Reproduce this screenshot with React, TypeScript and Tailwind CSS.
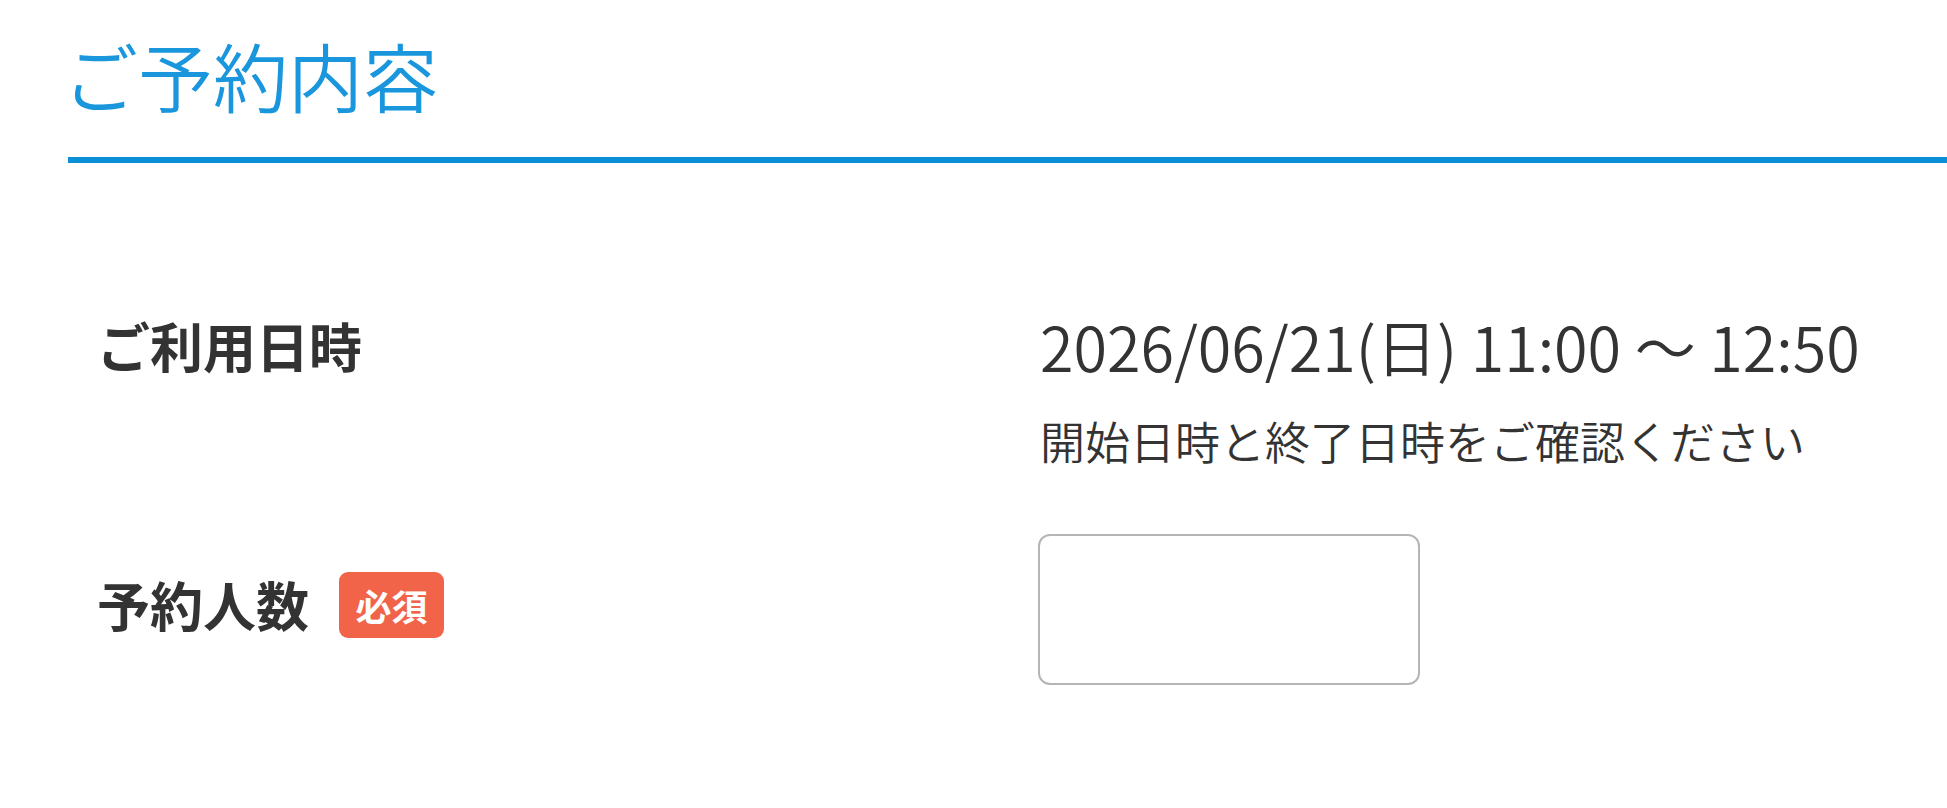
import React from 'react';

const jp = "font-['Noto_Sans_CJK_JP','Noto_Sans',sans-serif]";

export default function App() {
  return (
    <div className={`min-h-screen bg-white pl-[68px] text-[#333333] ${jp}`}>
      <h2 className="-ml-[5px] pt-[37px] text-[75px] leading-none font-[350] text-[#1a96dc]">ご予約内容</h2>
      <div className="mt-[45px] h-[6px] bg-[#0b8fd7]" />

      <div className="pl-[29px] pt-[152px]">
        {/* ご利用日時 */}
        <div className="flex">
          <div className="w-[943px] shrink-0 pt-[4px] text-[53px] leading-none font-bold">ご利用日時</div>
          <div>
            <div className="text-[61px] leading-none font-[350]">2026/06/21(日) 11:00 〜 12:50</div>
            <div className="mt-[42px] text-[45px] leading-none font-[350]">開始日時と終了日時をご確認ください</div>
          </div>
        </div>

        {/* 予約人数 */}
        <div className="mt-[71px] flex items-center">
          <div className="mb-[10px] flex w-[943px] shrink-0 items-center gap-[30px]">
            <span className="text-[53px] leading-none font-bold">予約人数</span>
            <span className="flex h-[66px] w-[105px] items-center justify-center rounded-[9px] bg-[#f1644a] text-[36px] leading-none font-bold text-white">
              必須
            </span>
          </div>
          <input
            type="text"
            className="-ml-[2px] h-[151px] w-[382px] rounded-[12px] border-2 border-[#b5b5b5] bg-white outline-none"
          />
        </div>
      </div>
    </div>
  );
}
